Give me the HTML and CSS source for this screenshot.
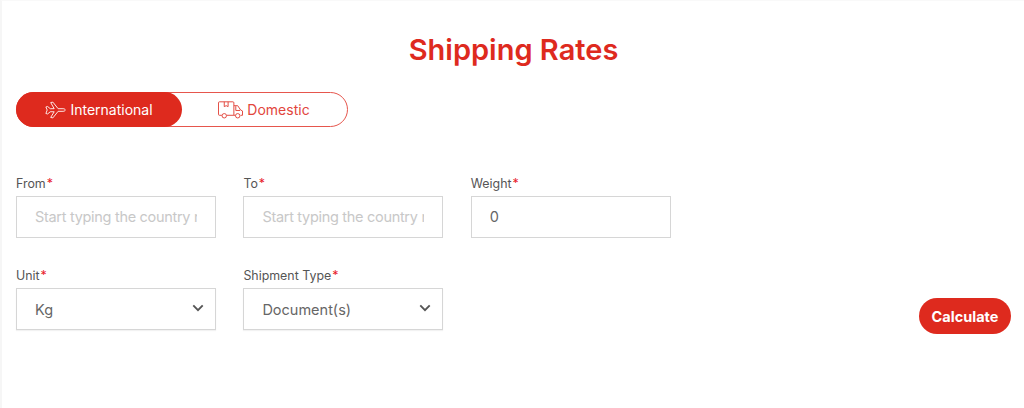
FILE: index.html
```html
<!DOCTYPE html>
<html lang="en">
<head>
    <meta charset="UTF-8">
    <meta name="viewport" content="width=device-width, initial-scale=1.0">
    <title>Shipping Rates</title>
    <link rel="stylesheet" href="styles.css">
</head>
<body>
    <div class="container">
        <h1 class="title">Shipping Rates</h1>
        <div class="toggle">
            <button class="tab active">
                <svg class="plane" viewBox="0 0 24 20" width="21" height="18" fill="none" stroke="currentColor" stroke-width="1" stroke-linejoin="round">
                    <path d="M1 6.500l2-.5 3 2.500h4.500L6.500 1.500 9 1l6 7.500h5.500c1.500 0 2.700.7 2.700 1.500s-1.200 1.500-2.700 1.500H15L9 19l-2.500-.5 4-6.500H6l-3 2.500-2-.5 1.500-4z"/>
                </svg>
                International
            </button>
            <button class="tab">
                <svg class="truck" viewBox="0 0 26 18" width="25" height="18" fill="none" stroke="currentColor" stroke-width="1" stroke-linejoin="round">
                    <path d="M4 14.500H1.500a1 1 0 0 1-1-1V1.500a1 1 0 0 1 1-1h14a1 1 0 0 1 1 1v13H9"/>
                    <path d="M6.500 .5v5l2-1 2 1v-5"/>
                    <path d="M16.500 4.500h4l3 4.500 2 1v4.500h-2M18 14.500h-1.500"/>
                    <path d="M18.500 5v4.500H23"/>
                    <circle cx="6.500" cy="15" r="2.300"/>
                    <circle cx="20.500" cy="15" r="2.300"/>
                </svg>
                Domestic
            </button>
        </div>

        <div class="row">
            <div class="field">
                <label>From<span class="req">*</span></label>
                <input type="text" placeholder="Start typing the country name">
            </div>
            <div class="field">
                <label>To<span class="req">*</span></label>
                <input type="text" placeholder="Start typing the country name">
            </div>
            <div class="field">
                <label>Weight<span class="req">*</span></label>
                <input type="text" value="0">
            </div>
        </div>

        <div class="row row-last">
            <div class="field">
                <label>Unit<span class="req">*</span></label>
                <div class="select">Kg
                    <svg viewBox="0 0 14 9" width="12" height="8" fill="none" stroke="currentColor" stroke-width="2.200"><path d="M1.500 1.500L7 7l5.500-5.500"/></svg>
                </div>
            </div>
            <div class="field">
                <label>Shipment Type<span class="req">*</span></label>
                <div class="select">Document(s)
                    <svg viewBox="0 0 14 9" width="12" height="8" fill="none" stroke="currentColor" stroke-width="2.200"><path d="M1.500 1.500L7 7l5.500-5.500"/></svg>
                </div>
            </div>
            <button class="calc">Calculate</button>
        </div>
    </div>
</body>
</html>
```

FILE: styles.css
```css
*{ box-sizing: border-box;}
html, body{
    margin:0;
    height:100%;
}
body{
    background:#fff;
    font-family:"Inter", "Liberation Sans", sans-serif;
    color:#555;
    overflow:hidden;
}
.container{
    height:408px;
    border-left:2px solid #f6f6f6;
    border-top:1px solid #f9f9f9;
    padding:0 13px 0 14px;
}
.title{
    margin:30px 0 0;
    font-size:29px;
    line-height:38px;
    font-weight:600;
    color:#de2a1e;
    text-align:center;
}
.toggle{
    width:332px;
    height:35px;
    margin-top:23px;
    display:flex;
    border:1px solid #e6564d;
    border-radius:18px;
}
.tab{
    width:166px;
    height:35px;
    margin-top:-1px;
    margin-left:-1px;
    display:flex;
    align-items:center;
    justify-content:center;
    gap:4px;
    border:0;
    border-radius:18px;
    background:none;
    color:#e2463c;
    font-family:inherit;
    font-size:14px;
    padding:0;
}
.tab.active{
    background:#de2a1e;
    color:#fff;
}
.row{
    display:flex;
    gap:27.400px;
    margin-top:48px;
}
.row-last{
    margin-top:29px;
    align-items:flex-end;
}
.field{
    width:200px;
}
.field label{
    display:block;
    font-size:12.400px;
    line-height:17px;
    margin-bottom:4px;
}
.req{
    color:#e8202a;
    margin-left:1px;
}
.field input, .select{
    display:block;
    width:200px;
    height:42px;
    border:1px solid #d6d6d6;
    background:#fff;
    padding:0 18.500px 0 18px;
    font-family:inherit;
    font-size:14.500px;
    color:#666;
    outline:none;
}
.field input{
    padding-bottom:2px;
}
.field input::placeholder{
    color:#c8c8c8;
    letter-spacing:-0.3px;
}
.select{
    display:flex;
    align-items:center;
    justify-content:space-between;
    padding-right:11px;
    box-shadow:0 1px 1px rgba(0,0,0,0.05);
}
.select svg{
    color:#555;
    margin-top:-3px;
}
.calc{
    width:92px;
    height:36px;
    margin-left:auto;
    margin-bottom:-4px;
    border:0;
    border-radius:18px;
    background:#de2a1e;
    color:#fff;
    font-family:inherit;
    font-size:14.500px;
    font-weight:700;
}
```
